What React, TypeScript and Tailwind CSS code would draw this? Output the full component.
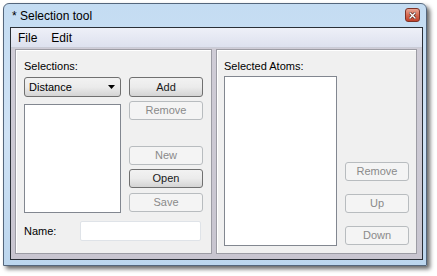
import React from "react";

function Btn({ label, disabled, className }: { label: string; disabled?: boolean; className?: string }) {
  return (
    <button
      type="button"
      disabled={disabled}
      className={
        "flex items-center justify-center rounded-[3px] border text-[11px] leading-none " +
        (disabled
          ? "border-[#b8bcbf] bg-[#f4f4f4] text-[#8a8a8a] "
          : "border-[#707070] bg-gradient-to-b from-[#f2f2f2] via-[#ebebeb] to-[#d4d4d4] text-[#1a1a1a] ") +
        (className || "")
      }
    >
      {label}
    </button>
  );
}

export default function App() {
  return (
    <div className="h-[276px] w-[437px] overflow-hidden bg-white font-['Liberation_Sans',Arial,sans-serif] text-black">
      <div className="ml-[3px] mt-[3px] flex h-[263px] w-[424px] flex-col rounded-t-[6px] border border-[#54667c] bg-gradient-to-b from-[#c4dcf2] via-[#cfe2f5] to-[#bcd6ee] shadow-[3px_3px_4px_rgba(0,0,0,0.6)]">
        {/* title bar */}
        <div className="flex h-[23px] items-center justify-between pl-[8px] pr-[6px]">
          <span className="mt-[1px] text-[12px] leading-none">* Selection tool</span>
          <div className="mt-[-1px] flex h-[14px] w-[15px] items-center justify-center rounded-[3px] border border-[#7d3327] bg-gradient-to-b from-[#e9a595] via-[#d66a52] to-[#c0402a]">
            <svg width="7" height="7" viewBox="0 0 7 7">
              <path d="M1 1 L6 6 M6 1 L1 6" stroke="#4a1810" strokeWidth="2.6" strokeLinecap="square" />
              <path d="M1 1 L6 6 M6 1 L1 6" stroke="#ffffff" strokeWidth="1.4" strokeLinecap="square" />
            </svg>
          </div>
        </div>

        {/* client area */}
        <div className="ml-[6px] flex h-[233px] w-[413px] flex-col border border-[#2a2f36] bg-[#f0f0f0]">
          {/* menu */}
          <div className="flex h-[20px] items-center gap-[14px] border-b border-[#c9cbd6] bg-gradient-to-b from-[#eef0f8] to-[#dde1ee] pl-[7px] pt-[1px] text-[12px]">
            <span>File</span>
            <span>Edit</span>
          </div>

          {/* content */}
          <div className="flex flex-1 gap-[4px] bg-gradient-to-b from-[#cfccd6] to-[#c8c5d0] pb-[5px] pl-[4px] pr-[5px] pt-[1px]">
            {/* left panel */}
            <div className="flex w-[197px] flex-col border border-[#9c9ca4] bg-[#f0f0f0] pl-[8px] pt-[10px] text-[11px] shadow-[inset_1px_1px_0_#ffffff]">
              <div className="h-[13px] leading-[13px]">Selections:</div>
              <div className="mt-[4px] flex gap-[8px]">
                <div className="flex w-[97px] flex-col">
                  <div className="flex h-[20px] items-center justify-between rounded-[3px] border border-[#707070] bg-gradient-to-b from-[#f2f2f2] via-[#ebebeb] to-[#d4d4d4] pl-[4px] pr-[5px]">
                    <span>Distance</span>
                    <svg width="7" height="4" viewBox="0 0 7 4">
                      <path d="M0 0 H7 L3.5 4 Z" fill="#000" />
                    </svg>
                  </div>
                  <div className="mt-[7px] h-[109px] border border-[#828790] bg-white" />
                </div>
                <div className="flex w-[74px] flex-col">
                  <Btn label="Add" className="h-[20px]" />
                  <Btn label="Remove" disabled className="mt-[4px] h-[19px]" />
                  <Btn label="New" disabled className="mt-[26px] h-[19px]" />
                  <Btn label="Open" className="mt-[4px] h-[19px]" />
                  <Btn label="Save" disabled className="mt-[5px] h-[19px]" />
                </div>
              </div>
              <div className="mt-[8px] flex items-center">
                <span className="w-[56px]">Name:</span>
                <div className="h-[20px] w-[121px] rounded-[2px] border border-[#dfe3e8] bg-white" />
              </div>
            </div>

            {/* right panel */}
            <div className="flex w-[201px] flex-col border border-[#9c9ca4] bg-[#f0f0f0] pl-[7px] pt-[10px] text-[11px] shadow-[inset_1px_1px_0_#ffffff]">
              <div className="h-[13px] leading-[13px]">Selected Atoms:</div>
              <div className="mt-[3px] flex gap-[8px]">
                <div className="h-[170px] w-[113px] border border-[#828790] bg-white" />
                <div className="flex w-[64px] flex-col justify-end gap-[13px] pb-[1px]">
                  <Btn label="Remove" disabled className="h-[19px]" />
                  <Btn label="Up" disabled className="h-[19px]" />
                  <Btn label="Down" disabled className="h-[19px]" />
                </div>
              </div>
            </div>
          </div>
        </div>
      </div>
    </div>
  );
}
